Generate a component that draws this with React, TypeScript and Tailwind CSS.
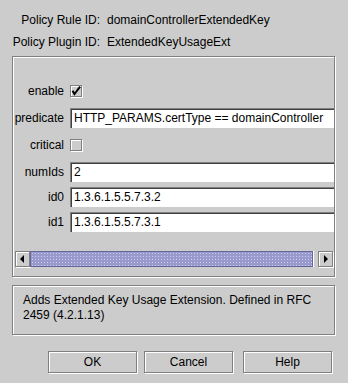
import React from 'react';

const etched = 'border border-[#808080] shadow-[inset_1px_1px_0_#ffffff,1px_1px_0_#ffffff]';

const CheckBox: React.FC<{ checked?: boolean }> = ({ checked }) => (
  <div className={`w-[12px] h-[12px] bg-[#cccccc] ${etched} flex items-center justify-center`}>
    {checked && (
      <svg width="10" height="10" viewBox="0 0 10 10">
        <path d="M2 5.5 L3.5 8 L8.5 1.5" fill="none" stroke="#000" strokeWidth="2" strokeLinecap="square" />
      </svg>
    )}
  </div>
);

const Field: React.FC<{ value: string }> = ({ value }) => (
  <div className="h-[20px] bg-white border-t border-l border-[#808080] shadow-[inset_1px_1px_0_#404040] pl-[3px] leading-[19px] whitespace-nowrap overflow-hidden">
    {value}
  </div>
);

const ArrowButton: React.FC<{ dir: 'left' | 'right' }> = ({ dir }) => (
  <div className={`w-[15px] h-[16px] bg-[#cccccc] ${etched} flex items-center justify-center shrink-0`}>
    <svg width="5" height="8" viewBox="0 0 5 8">
      {dir === 'left' ? <path d="M4 0 L0 4 L4 8 Z" fill="#000" /> : <path d="M1 0 L5 4 L1 8 Z" fill="#000" />}
    </svg>
  </div>
);

const App: React.FC = () => {
  const rows: { label: string; field?: string; check?: boolean }[] = [
    { label: 'enable', check: true },
    { label: 'predicate', field: 'HTTP_PARAMS.certType == domainController' },
    { label: 'critical', check: false },
    { label: 'numIds', field: '2' },
    { label: 'id0', field: '1.3.6.1.5.5.7.3.2' },
    { label: 'id1', field: '1.3.6.1.5.5.7.3.1' },
  ];

  return (
    <div className="w-[348px] h-[383px] bg-[#cccccc] overflow-hidden text-[12px] text-black font-['Liberation_Sans',Arial,sans-serif]">
      {/* header */}
      <div className="pt-[13px] grid grid-cols-[100px_auto] gap-x-[7px] gap-y-[7px] leading-[15px]">
        <div className="text-right whitespace-nowrap">Policy Rule ID:</div>
        <div>domainControllerExtendedKey</div>
        <div className="text-right whitespace-nowrap">Policy Plugin ID:</div>
        <div>ExtendedKeyUsageExt</div>
      </div>

      {/* plugin params */}
      <div className={`mt-[6px] ml-[12px] w-[323px] h-[221px] ${etched}`}>
        <div className="pt-[22px] pl-[1px] overflow-hidden">
          <div className="grid grid-cols-[50px_1fr] gap-x-[6px] gap-y-[5px]">
            {rows.map((r) => (
              <React.Fragment key={r.label}>
                <div className={`text-right ${r.check === undefined ? 'leading-[20px]' : 'leading-[24px]'}`}>{r.label}</div>
                {r.check === undefined ? (
                  <Field value={r.field ?? ''} />
                ) : (
                  <div className="h-[24px] flex items-center">
                    <CheckBox checked={r.check} />
                  </div>
                )}
              </React.Fragment>
            ))}
          </div>
        </div>

        {/* horizontal scrollbar */}
        <div className="mt-[19px] ml-[2px] w-[318px] h-[16px] flex">
          <ArrowButton dir="left" />
          <div className="w-[283px] h-[16px] border border-[#666699] bg-[#9999cc] bg-[radial-gradient(circle,#ccccff_0.7px,transparent_0.9px)] bg-[length:3px_3px] shadow-[1px_0_0_#ffffff]" />
          <div className="flex-1" />
          <ArrowButton dir="right" />
        </div>
      </div>

      {/* description */}
      <div className={`mt-[8px] ml-[12px] w-[323px] h-[50px] ${etched} pl-[10px] pr-[10px] pt-[7px] leading-[15px]`}>
        Adds Extended Key Usage Extension. Defined in RFC 2459 (4.2.1.13)
      </div>

      {/* buttons */}
      <div className="mt-[16px] pl-[48px] flex">
        <button className={`w-[89px] h-[22px] bg-[#cccccc] ${etched}`}>OK</button>
        <button className={`ml-[7px] w-[89px] h-[22px] bg-[#cccccc] ${etched}`}>Cancel</button>
        <button className={`ml-[10px] w-[89px] h-[22px] bg-[#cccccc] ${etched}`}>Help</button>
      </div>
    </div>
  );
};

export default App;
